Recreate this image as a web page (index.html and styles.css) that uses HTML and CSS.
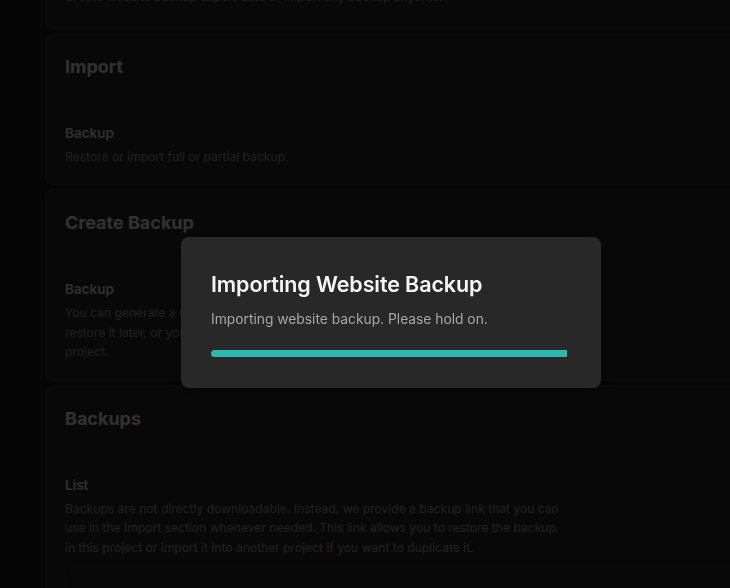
FILE: index.html
```html
<!DOCTYPE html>
<html lang="en">
<head>
    <meta charset="UTF-8">
    <meta name="viewport" content="width=device-width, initial-scale=1.0">
    <title>Backup</title>
    <link rel="stylesheet" href="styles.css">
</head>
<body>
    <div class="page">
        <section class="card card-intro">
            <p class="desc">Create website backup export data or import any backup anytime.</p>
        </section>

        <section class="card">
            <h2>Import</h2>
            <div class="field">
                <h3>Backup</h3>
                <p class="desc">Restore or import full or partial backup.</p>
            </div>
        </section>

        <section class="card">
            <h2>Create Backup</h2>
            <div class="field">
                <h3>Backup</h3>
                <p class="desc">You can generate a new backup of your entire website at any time, and then use it to restore it later, or you can import the backup file into another website or a different project.</p>
            </div>
        </section>

        <section class="card">
            <h2>Backups</h2>
            <div class="field">
                <h3>List</h3>
                <p class="desc">Backups are not directly downloadable. Instead, we provide a backup link that you can use in the Import section whenever needed. This link allows you to restore the backup in this project or import it into another project if you want to duplicate it.</p>
                <div class="list-box"></div>
            </div>
        </section>
    </div>

    <div class="backdrop">
        <div class="modal">
            <h1>Importing Website Backup</h1>
            <p>Importing website backup. Please hold on.</p>
            <div class="progress">
                <div class="progress-bar" style="width: 99%"></div>
            </div>
        </div>
    </div>
</body>
</html>
```

FILE: styles.css
```css
html, body {
    margin: 0;
    height: 100%;
    overflow: hidden;
}
body {
    background-color: #1a1a1a;
    color: #eaeaea;
    font-family: Inter, "Noto Sans", sans-serif;
}
.page {
    width: 760px;
    margin-top: -44px;
    padding-left: 45px;
    display: flex;
    flex-direction: column;
    gap: 4px;
}
.card {
    background-color: #2c2c2c;
    border: 1px solid #3a3a3a;
    border-radius: 8px;
    padding: 21px 19px 18px;
}
.card-intro {
    padding-top: 30px;
    padding-bottom: 21px;
}
.card h2 {
    margin: 0;
    font-size: 18px;
    line-height: 24px;
    font-weight: 700;
    color: #f2f2f2;
}
.field {
    margin-top: 44px;
}
.card h3 {
    margin: 0;
    font-size: 13.5px;
    line-height: 20px;
    font-weight: 600;
    color: #e6e6e6;
}
.desc {
    margin: 4px 0 0;
    max-width: 500px;
    font-size: 12.1px;
    line-height: 19.5px;
    color: #a0a0a0;
}
.card-intro .desc {
    margin: 0;
    max-width: none;
}
.list-box {
    margin-top: 9px;
    height: 60px;
    border: 1px solid #3a3a3a;
    border-radius: 6px;
    background-color: #262626;
}

/* loading dialog */
.backdrop {
    position: fixed;
    inset: 0;
    background-color: rgba(0, 0, 0, 0.8);
}
.modal {
    position: absolute;
    left: 181px;
    top: 237px;
    width: 420px;
    box-sizing: border-box;
    padding: 32px 30px 31px;
    background-color: #282828;
    border-radius: 8px;
    box-shadow: 0 4px 20px rgba(0, 0, 0, 0.4);
}
.modal h1 {
    margin: 0;
    font-size: 21.5px;
    line-height: 30px;
    font-weight: 600;
    color: #f5f5f5;
    letter-spacing: -0.1px;
}
.modal p {
    margin: 10px 0 0;
    font-size: 13.8px;
    line-height: 20px;
    color: #a6a6a6;
}
.progress {
    margin-top: 21px;
    height: 7px;
}
.progress-bar {
    height: 100%;
    background-color: #2cb8aa;
    border-radius: 4px 0 0 4px;
}
```
